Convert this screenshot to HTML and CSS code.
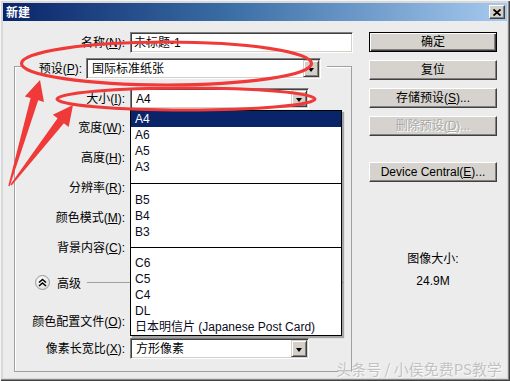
FILE: index.html
```html
<!DOCTYPE html>
<html lang="zh-CN">
<head>
    <meta charset="UTF-8">
    <title>新建</title>
    <link rel="stylesheet" href="styles.css">
</head>
<body>
    <div class="window">
        <div class="titlebar">
            <span class="title">新建</span>
            <span class="close-btn">
                <svg width="8" height="7" viewBox="0 0 8 7"><path d="M0.5 0.5 L7.5 6.5 M7.5 0.5 L0.5 6.5" stroke="#000" stroke-width="1.8"/></svg>
            </span>
        </div>

        <div class="dialog">
            <div class="form">
                <div class="row">
                    <span class="label name-label">名称(<u>N</u>):</span>
                    <div class="textbox name-box">未标题-1</div>
                </div>

                <div class="group">
                    <div class="preset-row">
                        <span class="label preset-label">预设(<u>P</u>):</span>
                        <div class="select preset-select">
                            <span class="select-text">国际标准纸张</span>
                            <i class="arrow-btn"></i>
                        </div>
                    </div>

                    <div class="row size-row">
                        <span class="label">大小(<u>I</u>):</span>
                        <div class="select size-select">
                            <span class="select-text">A4</span>
                            <i class="arrow-btn"></i>
                            <!-- 展开的下拉列表 -->
                            <div class="dropdown">
                                <ul class="drop-group">
                                    <li class="selected">A4</li>
                                    <li>A6</li>
                                    <li>A5</li>
                                    <li>A3</li>
                                </ul>
                                <ul class="drop-group group-b">
                                    <li>B5</li>
                                    <li>B4</li>
                                    <li>B3</li>
                                </ul>
                                <ul class="drop-group group-c">
                                    <li>C6</li>
                                    <li>C5</li>
                                    <li>C4</li>
                                    <li>DL</li>
                                    <li>日本明信片 (Japanese Post Card)</li>
                                </ul>
                            </div>
                        </div>
                    </div>

                    <div class="fields">
                        <div class="row"><span class="label">宽度(<u>W</u>):</span></div>
                        <div class="row"><span class="label">高度(<u>H</u>):</span></div>
                        <div class="row"><span class="label">分辨率(<u>R</u>):</span></div>
                        <div class="row"><span class="label">颜色模式(<u>M</u>):</span></div>
                        <div class="row"><span class="label">背景内容(<u>C</u>):</span></div>
                    </div>

                    <div class="advanced">
                        <span class="toggle">
                            <svg width="9" height="9" viewBox="0 0 9 9"><path d="M1 4.5 L4.5 1.5 L8 4.5 M1 8 L4.5 5 L8 8" fill="none" stroke="#000" stroke-width="1.6"/></svg>
                        </span>
                        <span class="advanced-text">高级</span>
                        <span class="advanced-line"></span>
                    </div>

                    <div class="row profile-row">
                        <span class="label">颜色配置文件(<u>O</u>):</span>
                    </div>

                    <div class="row ratio-row">
                        <span class="label">像素长宽比(<u>X</u>):</span>
                        <div class="select size-select">
                            <span class="select-text">方形像素</span>
                            <i class="arrow-btn"></i>
                        </div>
                    </div>
                </div>
            </div>

            <div class="side">
                <div class="btn btn-default">确定</div>
                <div class="btn">复位</div>
                <div class="btn">存储预设(<u>S</u>)...</div>
                <div class="btn btn-disabled">删除预设(<u>D</u>)...</div>
                <div class="btn btn-device">Device Central(<u>E</u>)...</div>

                <div class="image-size">
                    <div>图像大小:</div>
                    <div class="image-size-value">24.9M</div>
                </div>
            </div>
        </div>

        <div class="watermark">头条号 / 小侯免费PS教学</div>

        <!-- 红色标注 -->
        <svg class="marks" width="510" height="381" viewBox="0 0 510 381">
            <ellipse cx="166.5" cy="63.5" rx="145" ry="21.5" fill="none" stroke="#f03a3a" stroke-width="3.2"/>
            <ellipse cx="186" cy="99" rx="129" ry="11" fill="none" stroke="#f03a3a" stroke-width="3.2"/>
            <polygon points="8.3,185.8 30.6,98.1 24.8,96.4 40,80 44,102 38.2,100.3 9.7,186.2" fill="#f03a3a"/>
            <polygon points="10.4,184.6 57.6,118.3 52.8,114.7 73,105 68.7,126.9 63.9,123.3 11.6,185.4" fill="#f03a3a"/>
        </svg>
    </div>
</body>
</html>
```

FILE: styles.css
```css
* {
    margin: 0;
    padding: 0;
    box-sizing: border-box;
}

body {
    font-family: "Liberation Sans", "Noto Sans CJK SC", sans-serif;
    font-size: 12px;
    color: #000;
    background: #ececec;
}

u {
    text-decoration: underline;
    text-underline-offset: 1px;
}

.window {
    position: relative;
    width: 510px;
    height: 381px;
    padding: 3px;
    background: #d8d8d8;
    box-shadow: inset 1px 1px #f4f4f4, inset -1px -1px #404040, inset -2px -2px #888;
    overflow: hidden;
}

/* 标题栏 */
.titlebar {
    height: 18px;
    display: flex;
    align-items: center;
    justify-content: space-between;
    padding: 0 2px 0 3px;
    background: linear-gradient(90deg, #0a246a 0%, #3a6ea5 45%, #a6caf0 100%);
}

.title {
    color: #fff;
    font-weight: bold;
    font-family: "Noto Sans CJK SC", sans-serif;
    line-height: 18px;
}

.close-btn {
    width: 16px;
    height: 14px;
    display: flex;
    align-items: center;
    justify-content: center;
    background: #d4d0c8;
    border: 1px solid;
    border-color: #fff #404040 #404040 #fff;
    box-shadow: inset -1px -1px #808080;
}

/* 对话框主体 */
.dialog {
    display: flex;
    height: 357px;
    padding: 11px 10px 0 11px;
    background: #ececec;
}

.form {
    width: 340px;
}

.row {
    display: flex;
    align-items: center;
    height: 21px;
}

.label {
    width: 110px;
    margin-right: 5px;
    text-align: right;
    line-height: 16px;
    white-space: nowrap;
}

.name-label {
    width: 111px;
}

.textbox,
.select {
    position: relative;
    height: 21px;
    display: flex;
    align-items: center;
    background: #fff;
    border: 1px solid;
    border-color: #808080 #fff #fff #808080;
    box-shadow: inset 1px 1px #404040, inset -1px -1px #d4d0c8;
    line-height: 16px;
    white-space: nowrap;
}

.name-box {
    width: 223px;
    padding-left: 3px;
}

.select-text {
    flex: 1;
    padding-left: 5px;
}

.arrow-btn {
    width: 16px;
    height: 17px;
    margin-right: 1px;
    display: flex;
    align-items: center;
    justify-content: center;
    background: #d4d0c8;
    border: 1px solid;
    border-color: #d4d0c8 #404040 #404040 #d4d0c8;
    box-shadow: inset 1px 1px #fff, inset -1px -1px #808080;
}

.arrow-btn::after {
    content: "";
    border-left: 3.5px solid transparent;
    border-right: 3.5px solid transparent;
    border-top: 4px solid #000;
    margin-top: 2px;
}

/* 分组框 */
.group {
    width: 338px;
    margin-top: 13px;
    padding-bottom: 12px;
    border: 1px solid #a0a0a0;
    box-shadow: inset 1px 1px #fff;
}

.preset-row {
    display: flex;
    align-items: center;
    width: 302px;
    height: 21px;
    margin: -9px 0 0 10px;
    padding-right: 6px;
    background: #ececec;
}

.preset-label {
    width: 57px;
    margin-right: 4px;
}

.preset-select {
    width: 235px;
}

.size-row {
    margin-top: 9px;
}

.size-select {
    width: 179px;
}

.fields {
    display: flex;
    flex-direction: column;
    gap: 9px;
    margin-top: 8px;
}

/* 下拉列表 */
.dropdown {
    position: absolute;
    top: 21px;
    left: -1px;
    width: 212px;
    background: #fff;
    border: 1px solid #000;
    box-shadow: 2px 2px 1px rgba(0, 0, 0, 0.3);
    z-index: 5;
}

.drop-group {
    list-style: none;
    padding-bottom: 8px;
}

.drop-group li {
    height: 16px;
    line-height: 16px;
    padding-left: 4px;
    color: #0b0b20;
}

.drop-group li.selected {
    background: #0a246a;
    color: #fff;
}

.group-b {
    border-top: 1px solid #000;
    padding-top: 8px;
    padding-bottom: 7px;
}

.group-c {
    border-top: 1px solid #000;
    padding-top: 7px;
    padding-bottom: 0;
}

/* 高级 */
.advanced {
    display: flex;
    align-items: center;
    height: 21px;
    margin-top: 14px;
    padding-left: 20px;
}

.toggle {
    width: 15px;
    height: 15px;
    display: flex;
    align-items: center;
    justify-content: center;
    border: 1px solid #9a9a9a;
    border-radius: 50%;
    background: radial-gradient(circle at 40% 35%, #fff 0%, #e6e6e6 60%, #c8c8c8 100%);
}

.advanced-text {
    margin-left: 7px;
    line-height: 16px;
    font-family: "Noto Sans CJK SC", sans-serif;
}

.advanced-line {
    flex: 1;
    height: 1px;
    margin: 0 8px 0 6px;
    background: #a0a0a0;
}

.profile-row {
    margin-top: 18px;
}

.ratio-row {
    margin-top: 6px;
}

/* 右侧按钮 */
.side {
    width: 128px;
    margin-left: 15px;
}

.btn {
    height: 20px;
    margin-bottom: 8px;
    line-height: 18px;
    text-align: center;
    background: #d6d3ce;
    border: 1px solid;
    border-color: #fff #404040 #404040 #fff;
    box-shadow: inset -1px -1px #808080;
    white-space: nowrap;
}

.btn-default {
    border-color: #000;
    box-shadow: inset 1px 1px #fff, inset -1px -1px #404040, inset -2px -2px #808080;
}

.btn-disabled {
    color: #a8a8a8;
    text-shadow: 1px 1px 0 #fff;
}

.btn-device {
    margin-top: 26px;
}

.image-size {
    margin-top: 69px;
    text-align: center;
    line-height: 16px;
}

.image-size-value {
    margin-top: 6px;
}

.watermark {
    position: absolute;
    right: 8px;
    bottom: 2px;
    font-family: "Noto Sans CJK SC", sans-serif;
    font-size: 15px;
    line-height: 20px;
    color: rgba(185, 185, 185, 0.85);
    text-shadow: 1px 1px 0 rgba(255, 255, 255, 0.7);
}

.marks {
    position: absolute;
    left: 0;
    top: 0;
    pointer-events: none;
    z-index: 10;
}
```
